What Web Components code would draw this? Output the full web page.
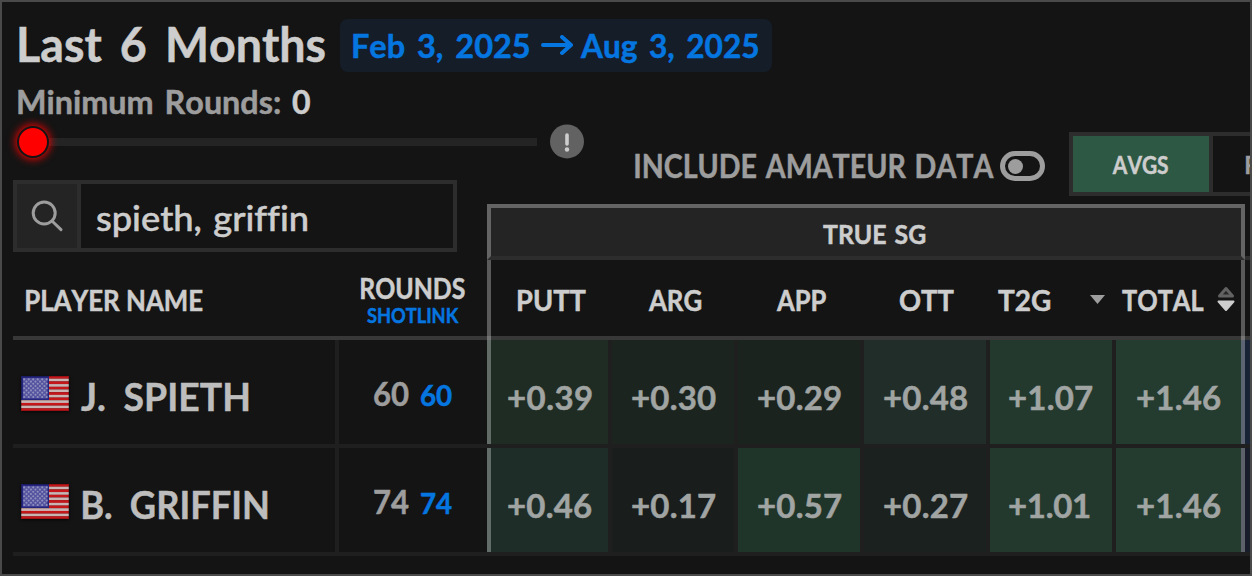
<!DOCTYPE html>
<html lang="en">
<head>
<meta charset="utf-8">
<title>Player Performance</title>
<style>
  body {
    margin: 0;
    background: #141414;
    font-family: Lato, "Open Sans", sans-serif;
    font-weight: bold;
    color: #cdcdcd;
  }
</style>
</head>
<body>
<performance-page></performance-page>

<script>
class PerformancePage extends HTMLElement {
  connectedCallback() {
    this.attachShadow({ mode: 'open' }).innerHTML = /* html */`
      <style>
        :host {
          display: flex;
          flex-direction: column;
          box-sizing: border-box;
          width: 1252px;
          height: 576px;
          padding-left: 11px;
          border: 2px solid #4a4a4a;
          background: #141414;
          overflow: hidden;
        }
        header {
          display: flex;
          align-items: flex-start;
          height: 77px;
          padding: 17px 0 0 6px;
          box-sizing: border-box;
        }
        h1 { margin: 0 15px 0 0; font-size: 48px; line-height: 50px; }
        .area { display: flex; height: 181px; }
        .filters { flex: none; width: 474px; }
        .filters .min {
          display: flex;
          gap: 12px;
          padding-left: 5px;
          height: 44px;
          line-height: 45px;
          font-size: 32px;
          color: #9d9d9d;
        }
        .min .count { color: #cdcdcd; }
        .right {
          flex: none;
          width: 763px;
          display: flex;
          flex-direction: column;
          background: linear-gradient(#2d2d2d, #2d2d2d) 758px 177px / 5px 4px no-repeat;
        }
        .toolbar { display: flex; height: 72px; padding: 53px 0 0 148px; }
        .include {
          display: flex;
          flex: none;
          align-items: center;
          gap: 6px;
          width: 434px;
          height: 68px;
          font-size: 32px;
          line-height: 68px;
          color: #9d9d9d;
        }
        .group {
          width: 750px;
          height: 48px;
          border: 4px solid #646464;
          border-bottom-color: #2d2d2d;
          background: #242424;
          display: flex;
          justify-content: center;
          align-items: center;
          font-size: 26.5px;
          line-height: 48px;
        }
        .group fit-text { margin: 4px 0 0 16px; }
      </style>
      <header>
        <h1><fit-text width="306" space="7">Last 6 Months</fit-text></h1>
        <date-badge from="Feb 3, 2025" to="Aug 3, 2025"></date-badge>
      </header>
      <div class="area">
        <div class="filters">
          <div class="min">
            <fit-text width="262" space="3">Minimum Rounds:</fit-text>
            <fit-text class="count" width="18">0</fit-text>
          </div>
          <round-slider></round-slider>
          <player-search value="spieth, griffin"></player-search>
        </div>
        <div class="right">
          <div class="toolbar">
            <div class="include">
              <fit-text width="359" space="2">INCLUDE AMATEUR DATA</fit-text>
              <toggle-switch></toggle-switch>
            </div>
            <view-tabs></view-tabs>
          </div>
          <div class="group"><fit-text width="102" space="2">TRUE SG</fit-text></div>
        </div>
      </div>
      <stats-table></stats-table>
    `;
  }
}

class DateBadge extends HTMLElement {
  connectedCallback() {
    this.attachShadow({ mode: 'open' }).innerHTML = /* html */`
      <style>
        :host {
          display: flex;
          align-items: center;
          box-sizing: border-box;
          width: 432px;
          height: 53px;
          padding-left: 13px;
          border-radius: 8px;
          background: #151d29;
          color: #0576e0;
          font-size: 32px;
          line-height: 53px;
        }
        svg { margin: 0 7px 0 11px; }
      </style>
      <fit-text width="176" space="4">${this.getAttribute('from')}</fit-text>
      <svg width="33" height="22" viewBox="0 0 33 22" fill="none" stroke="currentColor"
        stroke-width="4" stroke-linecap="round" stroke-linejoin="round">
        <path d="M3 10h28M22 2l9 8-9 8"/>
      </svg>
      <fit-text width="178" space="4">${this.getAttribute('to')}</fit-text>
    `;
  }
}

class RoundSlider extends HTMLElement {
  connectedCallback() {
    this.attachShadow({ mode: 'open' }).innerHTML = /* html */`
      <style>
        :host {
          display: flex;
          align-items: center;
          width: 571px;
          height: 38px;
        }
        .thumb {
          flex: none;
          width: 28px;
          height: 28px;
          margin-left: 4px;
          border: 2px solid #141414;
          border-radius: 50%;
          background: red;
          box-shadow: 0 0 8px 1px #f00;
          z-index: 1;
        }
        .track {
          flex: none;
          width: 504px;
          height: 8px;
          margin: 0 13px 0 -16px;
          background: #242424;
        }
        svg { flex: none; }
      </style>
      <div class="thumb"></div>
      <div class="track"></div>
      <svg width="34" height="36" viewBox="0 0 34 36">
        <circle cx="17" cy="17.4" r="17" fill="#626262"/>
        <path d="M17 11v9" stroke="#cdcdcd" stroke-width="3.6" stroke-linecap="round"/>
        <circle cx="17" cy="25.5" r="2.2" fill="#cdcdcd"/>
      </svg>
    `;
  }
}

class PlayerSearch extends HTMLElement {
  connectedCallback() {
    this.attachShadow({ mode: 'open' }).innerHTML = /* html */`
      <style>
        :host {
          display: flex;
          box-sizing: border-box;
          width: 444px;
          height: 72px;
          margin-top: 19px;
          border: 4px solid #2d2d2d;
        }
        .icon {
          width: 60px;
          border-right: 4px solid #2d2d2d;
          background: #242424;
        }
        .value {
          padding-left: 16px;
          font-size: 34px;
          font-weight: 500;
          line-height: 67px;
        }
      </style>
      <div class="icon">
        <svg width="60" height="64" viewBox="0 0 60 64" fill="none" stroke="#9d9d9d" stroke-width="3">
          <circle cx="27.2" cy="29" r="11"/>
          <path d="M35 37l9 8.600" stroke-linecap="round"/>
        </svg>
      </div>
      <div class="value"><fit-text width="208" space="2">${this.getAttribute('value')}</fit-text></div>
    `;
  }
}

class ToggleSwitch extends HTMLElement {
  connectedCallback() {
    this.attachShadow({ mode: 'open' }).innerHTML = /* html */`
      <style>
        :host {
          display: block;
          box-sizing: border-box;
          width: 45px;
          height: 30px;
          padding: 2.500px;
          border: 5px solid #9d9d9d;
          border-radius: 15px;
        }
        .knob { width: 15px; height: 15px; border-radius: 50%; background: #9d9d9d; }
      </style>
      <div class="knob"></div>
    `;
  }
}

class ViewTabs extends HTMLElement {
  connectedCallback() {
    this.attachShadow({ mode: 'open' }).innerHTML = /* html */`
      <style>
        :host {
          display: flex;
          flex: none;
          box-sizing: border-box;
          width: 280px;
          height: 64px;
          border: 4px solid #2d2d2d;
          font-size: 25px;
          line-height: 56px;
        }
        .tab { width: 97px; padding-left: 39px; }
        .tab.active { background: #2d5843; border-right: 4px solid #2d2d2d; }
        .tab + .tab { padding-left: 33px; color: #9d9d9d; }
      </style>
      <div class="tab active"><fit-text width="56">AVGS</fit-text></div>
      <div class="tab"><fit-text width="14">R</fit-text></div>
    `;
  }
}

class UsFlag extends HTMLElement {
  connectedCallback() {
    let stripes = '';
    for (let i = 0; i < 13; i++) {
      stripes += `<rect y="${i * 35 / 13}" width="48" height="2.8" fill="${i % 2 ? '#c9b4b4' : '#c5161a'}"/>`;
    }
    let stars = '';
    for (let row = 0; row < 9; row++) {
      for (let col = row % 2; col < 11; col += 2) {
        stars += `<circle cx="${3.2 + col * 2.25}" cy="${3.4 + row * 2.2}" r="1.05"/>`;
      }
    }
    this.attachShadow({ mode: 'open' }).innerHTML = /* html */`
      <style>
        :host { display: block; width: 48px; height: 35px; box-shadow: 0 1px 3px #000a; }
        svg { display: block; }
      </style>
      <svg width="48" height="35" viewBox="0 0 48 35">
        ${stripes}
        <rect width="28" height="24" fill="#25257e"/>
        <rect x="2" y="2" width="24.5" height="20.5" fill="#5353a0"/>
        <g fill="#9090bd">${stars}</g>
        <rect x=".5" y=".5" width="47" height="34" fill="none" stroke="#000" stroke-opacity=".22"/>
      </svg>
    `;
  }
}

const players = [
  {
    name: 'J. SPIETH', nameWidth: 167, indent: 12, rounds: 60, next: '#182336',
    stats: [['+0.39', 84, '#1f2c23'], ['+0.30', 84, '#1c2420'], ['+0.29', 83, '#1b231f'],
      ['+0.48', 83, '#202d28'], ['+1.07', 84, '#23392d'], ['+1.46', 84, '#243c2f']],
  },
  {
    name: 'B. GRIFFIN', nameWidth: 184, indent: 14, rounds: 74, next: '#171d29',
    stats: [['+0.46', 84, '#1f2d28'], ['+0.17', 84, '#191d1c'], ['+0.57', 84, '#203529'],
      ['+0.27', 84, '#1b211f'], ['+1.01', 81, '#23392d'], ['+1.46', 84, '#243c2f']],
  },
];

class StatsTable extends HTMLElement {
  static get styles() {
    return /* css */`
      :host { display: block; width: 1237px; }
      .row {
        display: grid;
        grid-template-columns: 326px 148px 125px 126px 126px 126px 126px 129px 5px;
        grid-template-rows: 100%;
        height: 104px;
        border-bottom: 4px solid #1f1f1f;
      }
      .row > div {
        display: flex;
        align-items: center;
        box-sizing: border-box;
        border-right: 4px solid #1f1f1f;
      }
      .row > .rounds, .row > .next { border-right: 0; }
      .row > .stat { padding: 10px 0 0 20px; font-size: 33px; color: #a0a4a2; }
      .row > .first { border-left: 4px solid #ffffff4d; padding-left: 17px; }
      .row > .last { border-right: 0; padding-left: 21px; }
      .row > .t2g { padding-left: 19px; }
      .row > .next { margin-left: -4px; border-left: 4px solid #ffffff4d; }
      .name { padding-left: 8px; font-size: 39px; color: #bdbdbd; }
      .name us-flag { margin-top: 3px; }
      .name fit-text { margin-top: 7px; }
      .rounds { align-items: baseline !important; padding: 33px 0 0 35px; gap: 12px; font-size: 33px; color: #9d9d9d; }
      .rounds .shotlink { font-size: 28px; color: #0576e0; }

      .head { height: 76px; border: 0; font-size: 28px; }
      .head > div, .head > .last { border-right: 0; }
      .head > .player { padding: 3px 0 0 13px; }
      .head > .count {
        flex-direction: column;
        align-items: flex-start;
        padding: 15px 0 0 22px;
        line-height: 26px;
      }
      .head .shotlink { margin: 1px 0 0 6px; font-size: 20.500px; color: #0576e0; font-weight: bold; }
      .head > .stat { padding-top: 3px; padding-left: var(--x); font-size: 28px; color: #cdcdcd; border-right: 0; }
      .head .caret { margin-left: 40px; }
      .head .sort { margin: -1px 0 0 13px; }
      /* line under the header, brighter where the group borders cross it */
      .rule {
        height: 4px;
        background:
          linear-gradient(#737373, #737373) 474px 0 / 4px 4px no-repeat,
          linear-gradient(#737373, #737373) 1228px 0 / 4px 4px no-repeat,
          #383838;
      }
    `;
  }

  row(player) {
    const kinds = ['first', '', '', '', 't2g', 'last'];
    return /* html */`
      <div class="row">
        <div class="name">
          <us-flag></us-flag>
          <fit-text width="${player.nameWidth}" space="9" style="margin-left:${player.indent}px">${player.name}</fit-text>
        </div>
        <div class="rounds">
          <fit-text width="35">${player.rounds}</fit-text>
          <fit-text class="shotlink" width="31">${player.rounds}</fit-text>
        </div>
        ${player.stats.map(([value, width, color], i) => `
          <div class="stat ${kinds[i]}" style="background:${color}">
            <fit-text width="${width}" tracked>${value}</fit-text>
          </div>`).join('')}
        <div class="next" style="background:${player.next}"></div>
      </div>
    `;
  }

  connectedCallback() {
    this.attachShadow({ mode: 'open' }).innerHTML = /* html */`
      <style>${StatsTable.styles}</style>
      <div class="row head">
        <div class="player"><fit-text width="177">PLAYER NAME</fit-text></div>
        <div class="count">
          <fit-text width="104">ROUNDS</fit-text>
          <fit-text class="shotlink" width="92">SHOTLINK</fit-text>
        </div>
        <div class="stat first" style="--x:27px"><fit-text width="68">PUTT</fit-text></div>
        <div class="stat" style="--x:36px"><fit-text width="53">ARG</fit-text></div>
        <div class="stat" style="--x:38px"><fit-text width="50">APP</fit-text></div>
        <div class="stat" style="--x:36px"><fit-text width="54">OTT</fit-text></div>
        <div class="stat" style="--x:8px">
          <fit-text width="52">T2G</fit-text>
          <svg class="caret" width="15" height="9"><path d="M0 0h15l-7.500 9z" fill="#9d9d9d"/></svg>
        </div>
        <div class="stat" style="--x:6px">
          <fit-text width="82">TOTAL</fit-text>
          <svg class="sort" width="18" height="26" viewBox="0 0 18 26" stroke-linejoin="round">
            <path d="M9 2.500L15.500 10h-13z" fill="#282828" stroke="#626262" stroke-width="3"/>
            <path d="M1.500 15.500h15L9 24z" fill="#cdcdcd" stroke="#cdcdcd" stroke-width="2"/>
          </svg>
        </div>
        <div class="next"></div>
      </div>
      <div class="rule"></div>
      ${players.map((player) => this.row(player)).join('')}
    `;
  }
}

// Label whose glyphs fill exactly the given width: condensed or widened by
// default, letter-spaced with the "tracked" attribute
class FitText extends HTMLElement {
  connectedCallback() {
    this.attachShadow({ mode: 'open' }).innerHTML = /* html */`
      <style>
        :host {
          display: block;
          flex: none;
          white-space: nowrap;
          font-kerning: none;
          font-variant-ligatures: none;
          transform-origin: 0 50%;
          -webkit-text-stroke: .5px currentColor;
        }
      </style>
      <slot></slot>
    `;

    const text = this.textContent;
    const width = Number(this.getAttribute('width'));
    const space = Number(this.getAttribute('space') || 0);
    const css = getComputedStyle(this);
    const ctx = document.createElement('canvas').getContext('2d');
    ctx.font = `${css.fontWeight} ${css.fontSize} ${css.fontFamily}`;
    ctx.fontKerning = 'none';
    const box = ctx.measureText(text);
    const ink = box.actualBoundingBoxRight + box.actualBoundingBoxLeft
      + space * (text.split(' ').length - 1);

    this.style.width = `${width}px`;
    this.style.textIndent = `${box.actualBoundingBoxLeft}px`;
    this.style.wordSpacing = `${space}px`;
    if (this.hasAttribute('tracked')) {
      this.style.letterSpacing = `${(width - ink) / (text.length - 1)}px`;
    } else {
      this.style.transform = `scaleX(${width / ink})`;
    }
  }
}

customElements.define('performance-page', PerformancePage);
customElements.define('date-badge', DateBadge);
customElements.define('round-slider', RoundSlider);
customElements.define('player-search', PlayerSearch);
customElements.define('toggle-switch', ToggleSwitch);
customElements.define('view-tabs', ViewTabs);
customElements.define('us-flag', UsFlag);
customElements.define('stats-table', StatsTable);
customElements.define('fit-text', FitText);
</script>
</body>
</html>
